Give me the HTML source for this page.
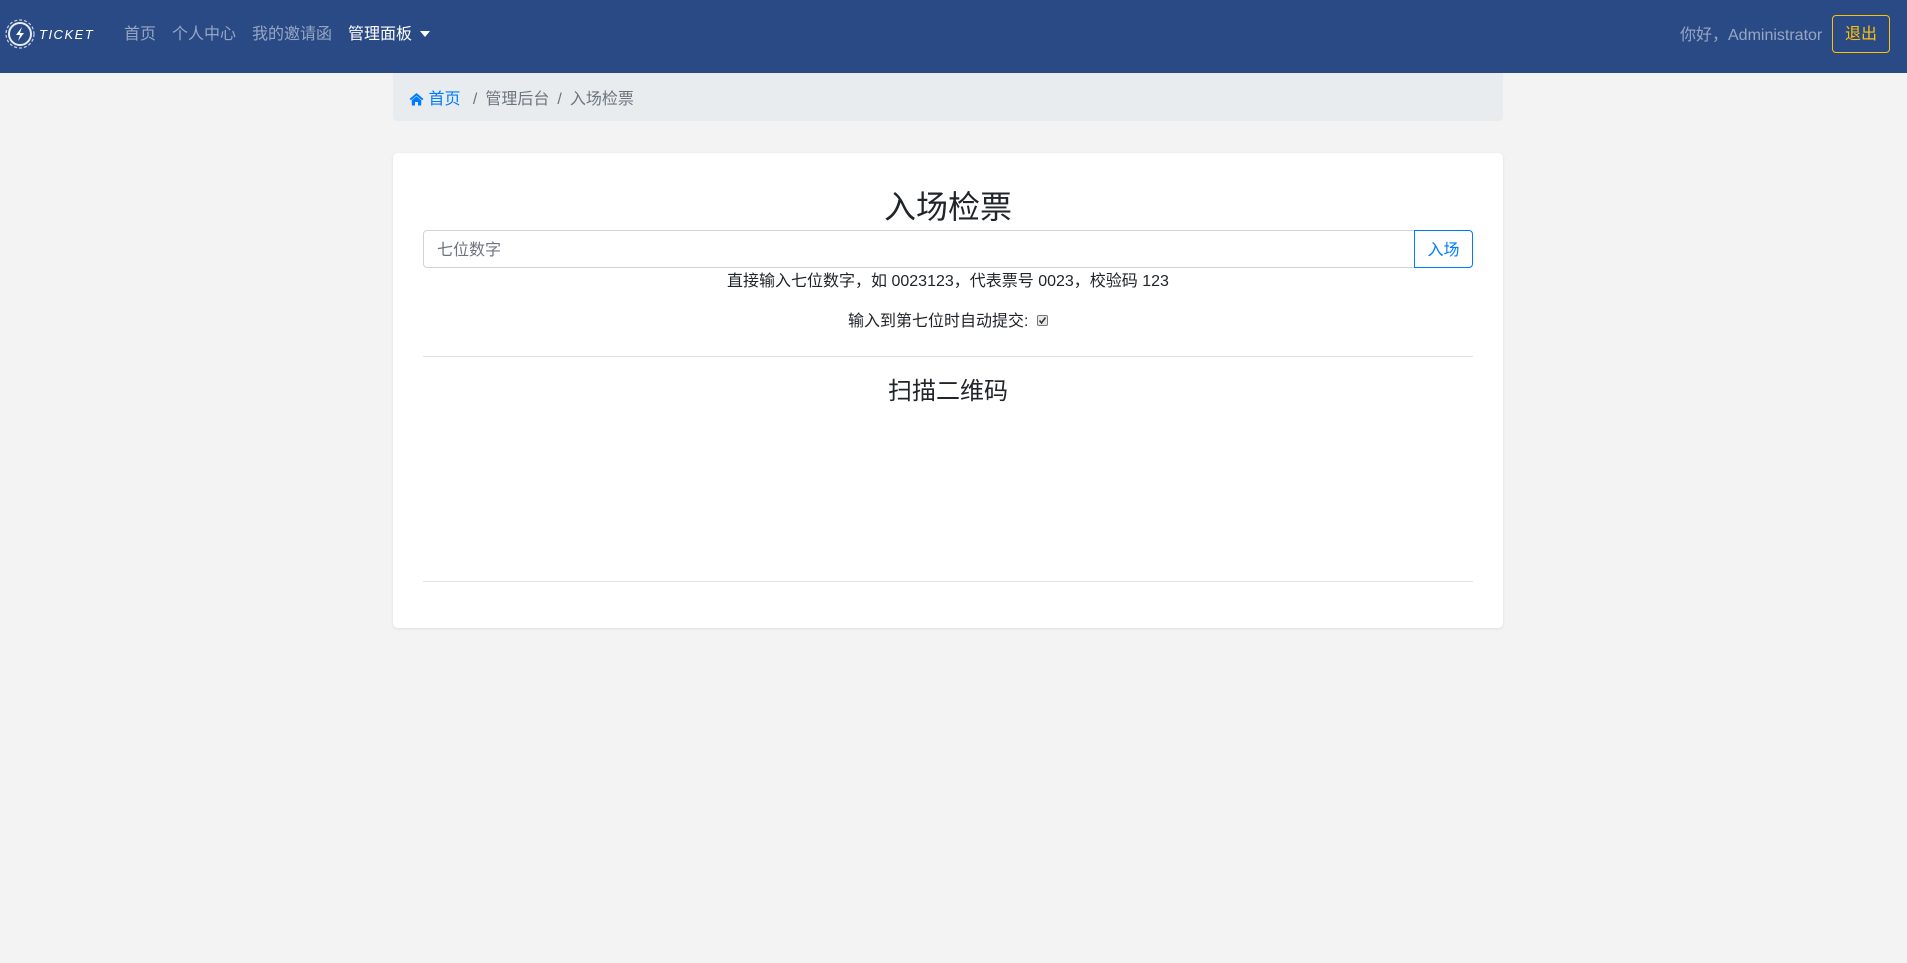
<!DOCTYPE html>
<html><head><meta charset="utf-8"><style>
*{box-sizing:border-box;margin:0;padding:0}
html,body{width:1907px;height:963px;background:#f3f3f3;font-family:"Liberation Sans","Noto Sans CJK SC",sans-serif;color:#212529;overflow:hidden;position:relative}
.nav{position:absolute;left:0;top:0;width:1907px;height:73px;background:#2a4a85}
.nav a{position:absolute;top:23px;font-size:16px;color:rgba(255,255,255,.5);text-decoration:none;line-height:24px}
.abs{position:absolute}
.bc{position:absolute;left:393px;top:73px;width:1110px;height:48px;background:#e9ecef;border-radius:0 0 4px 4px;font-size:16px;line-height:48px;padding-top:3px;padding-left:16px;color:#6c757d}
.card{position:absolute;left:393px;top:153px;width:1110px;height:475px;background:#fff;border-radius:5px;box-shadow:0 1px 3px rgba(0,0,0,.08)}
.c{position:absolute;left:0;width:1110px;text-align:center}
</style></head><body>
<div class="nav">
  <svg class="abs" style="left:5px;top:19px" width="30" height="30" viewBox="0 0 30 30">
    <circle cx="15" cy="15" r="11" fill="none" stroke="#e6ecf5" stroke-width="2"/>
    <circle cx="15" cy="15" r="14" fill="none" stroke="#c8d2e4" stroke-width="1.2" stroke-dasharray="3 2"/>
    <path d="M17 8 L11 16 L15 16 L13 22 L19 14 L15 14 Z" fill="#fff"/>
  </svg>
  <div class="abs" style="left:39px;top:25px;font-size:13px;font-style:italic;color:#fff;letter-spacing:1.5px;line-height:20px">TICKET</div>
  <a style="left:124px">首页</a>
  <a style="left:172px">个人中心</a>
  <a style="left:252px">我的邀请函</a>
  <a style="left:348px;color:#fff">管理面板</a>
  <svg class="abs" style="left:420px;top:31px" width="10" height="6"><path d="M0 0 L10 0 L5 6 Z" fill="#fff"/></svg>
  <a style="left:1680px;top:24px">你好，Administrator</a>
  <div class="abs" style="left:1832px;top:15px;width:58px;height:38px;border:1px solid #ffc107;border-radius:4px;color:#ffc107;font-size:16px;line-height:38px;text-align:center">退出</div>
</div>
<div class="bc">
  <svg style="vertical-align:-2px" width="15" height="14" viewBox="0 0 15 14"><path d="M7.5 1 L0.5 7 L2 8.3 L7.5 3.6 L13 8.3 L14.5 7 Z M2.8 8.2 L2.8 13.5 L6 13.5 L6 10 L9 10 L9 13.5 L12.2 13.5 L12.2 8.2 L7.5 4.3 Z" fill="#007bff"/></svg>
  <span style="color:#007bff">首页</span>
  <span style="padding:0 8px">/</span>管理后台<span style="padding:0 8px">/</span>入场检票
</div>
<div class="card">
  <div class="c" style="top:34px;font-size:32px;line-height:40px;font-weight:normal">入场检票</div>
  <div class="abs" style="left:30px;top:77px;width:992px;height:38px;border:1px solid #ced4da;border-radius:4px 0 0 4px;font-size:16px;line-height:40px;padding-left:13px;color:#6c757d">七位数字</div>
  <div class="abs" style="left:1021px;top:77px;width:59px;height:38px;border:1px solid #007bff;border-radius:0 4px 4px 0;font-size:16px;line-height:40px;text-align:center;color:#007bff">入场</div>
  <div class="c" style="top:117px;font-size:16px;line-height:24px">直接输入七位数字，如 0023123，代表票号 0023，校验码 123</div>
  <div class="c" style="top:157px;font-size:16px;line-height:24px">输入到第七位时自动提交: <span style="display:inline-block;width:11px;height:11px;border:1px solid #777;border-radius:2px;background:#e8e8e8;vertical-align:0;position:relative;margin-left:4px"><svg style="position:absolute;left:0;top:0" width="9" height="9" viewBox="0 0 9 9"><path d="M1.5 4.5 L3.5 7 L7.5 1.5" fill="none" stroke="#333" stroke-width="1.5"/></svg></span></div>
  <div class="abs" style="left:30px;top:203px;width:1050px;height:1px;background:#e3e3e3"></div>
  <div class="c" style="top:223px;font-size:24px;line-height:32px;font-weight:normal">扫描二维码</div>
  <div class="abs" style="left:30px;top:428px;width:1050px;height:1px;background:#e3e3e3"></div>
</div>
</body></html>
